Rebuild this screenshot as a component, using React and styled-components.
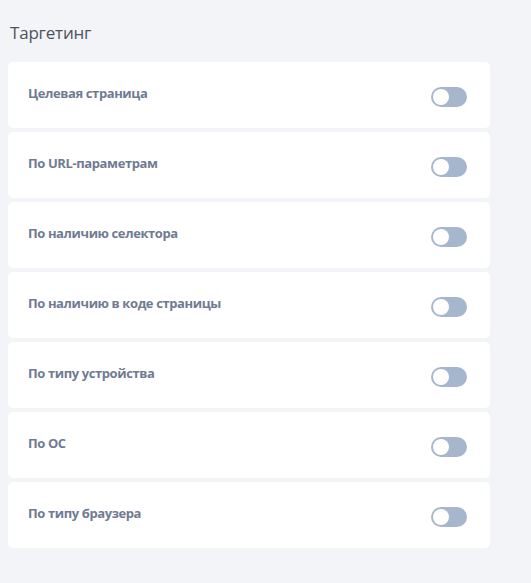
import React, { useState } from 'react';
import styled, { createGlobalStyle } from "styled-components";

const Global = createGlobalStyle`
  html, body {
    margin: 0;
    background: #f3f4f8;
    font-family: "Open Sans", "Noto Sans", sans-serif;
  }
`;

const Page = styled.div`
  width: 482px;
  padding: 22px 8px 35px;
`;

const Title = styled.h2`
  margin: 0 0 18px 2px;
  font-size: 17px;
  font-weight: 400;
  line-height: 22px;
  color: #4d535c;
  letter-spacing: -0.2px;
`;

const List = styled.div`
  display: flex;
  flex-direction: column;
  gap: 4px;
`;

const Card = styled.div`
  height: 66px;
  box-sizing: border-box;
  padding: 0 23px 0 20px;
  background: #fff;
  border-radius: 5px;
  display: flex;
  align-items: center;
  justify-content: space-between;
`;

const Label = styled.span`
  font-size: 13px;
  font-weight: 700;
  letter-spacing: -0.4px;
  color: #707b91;
  margin-top: -4px;
`;

const Track = styled.button`
  position: relative;
  width: 36px;
  height: 20px;
  padding: 0;
  border: none;
  border-radius: 10px;
  background: ${({ on }) => (on ? '#5b8def' : '#a6b7cd')};
  cursor: pointer;
  margin-top: 4px;
`;

const Knob = styled.span`
  position: absolute;
  top: 2px;
  left: ${({ on }) => (on ? '18px' : '2px')};
  width: 16px;
  height: 16px;
  border-radius: 50%;
  background: #fff;
  transition: left 0.2s;
`;

const items = [
    'Целевая страница',
    'По URL-параметрам',
    'По наличию селектора',
    'По наличию в коде страницы',
    'По типу устройства',
    'По ОС',
    'По типу браузера',
];

function Row({ label }) {
    const [on, setOn] = useState(false);
    return (
        <Card>
            <Label>{label}</Label>
            <Track on={on} onClick={() => setOn(!on)}>
                <Knob on={on}/>
            </Track>
        </Card>
    );
}

export default function App() {
    return (
        <>
            <Global/>
            <Page>
                <Title>Таргетинг</Title>
                <List>
                    {items.map((it) => <Row key={it} label={it}/>)}
                </List>
            </Page>
        </>
    );
}
